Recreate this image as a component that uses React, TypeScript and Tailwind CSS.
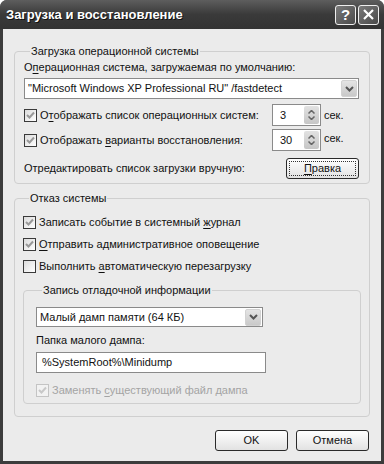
import React from "react";

function U({ children }: { children: React.ReactNode }) {
  return <span className="underline underline-offset-[1.5px]">{children}</span>;
}

function Check({ checked = true, disabled = false }: { checked?: boolean; disabled?: boolean }) {
  return (
    <span
      className={`w-[13px] h-[13px] shrink-0 flex items-center justify-center border ${
        disabled ? "border-[#c4c4c4] bg-[#f2f2f2]" : "border-[#3a3a3a] bg-gradient-to-br from-[#dcdcdc] to-white"
      }`}
    >
      {checked && (
        <svg width="9" height="9" viewBox="0 0 9 9">
          <path
            d="M1 4 L3.5 6.5 L8 1.5"
            fill="none"
            stroke={disabled ? "#c8c8c8" : "#999"}
            strokeWidth="2"
          />
        </svg>
      )}
    </span>
  );
}

function Arrow() {
  return (
    <span className="w-[16px] h-[17px] mr-[1px] rounded-[2px] bg-gradient-to-b from-[#e4e4e4] to-[#c9c9c9] border border-[#d2d2d2] flex items-center justify-center">
      <svg width="9" height="6" viewBox="0 0 9 6">
        <path d="M1 1 L4.5 4.5 L8 1" fill="none" stroke="#555" strokeWidth="2" />
      </svg>
    </span>
  );
}

function Spin({ value }: { value: string }) {
  return (
    <div className="w-[49px] h-[22px] border border-[#8a8a8a] bg-white flex items-center pl-[7px] pr-[1px]">
      <span className="flex-1">{value}</span>
      <span className="w-[15px] h-[18px] rounded-[2px] bg-gradient-to-b from-[#e2e2e2] to-[#c6c6c6] flex flex-col items-center justify-center gap-[2px]">
        <svg width="7" height="4" viewBox="0 0 7 4">
          <path d="M0.5 3.5 L3.5 0.5 L6.5 3.5" fill="none" stroke="#666" strokeWidth="1.5" />
        </svg>
        <svg width="7" height="4" viewBox="0 0 7 4">
          <path d="M0.5 0.5 L3.5 3.5 L6.5 0.5" fill="none" stroke="#666" strokeWidth="1.5" />
        </svg>
      </span>
    </div>
  );
}

function Btn({ children, focus = false }: { children: React.ReactNode; focus?: boolean }) {
  return (
    <div className="w-[73px] h-[21px] rounded-[3px] border border-[#2a2a2a] bg-gradient-to-b from-white to-[#e2e2e2] flex items-center justify-center p-[2px]">
      <div
        className={`w-full h-full flex items-center justify-center ${focus ? "border border-dotted border-[#333]" : ""}`}
      >
        {children}
      </div>
    </div>
  );
}

export default function App() {
  return (
    <div
      className="w-[384px] h-[464px] bg-[#3c3c3c] rounded-t-[7px] flex flex-col text-[11px] text-[#111] leading-none"
      style={{ fontFamily: '"Liberation Sans", Arial, sans-serif' }}
    >
      {/* title bar */}
      <div className="h-[29px] shrink-0 rounded-t-[7px] bg-gradient-to-b from-[#5e5e5e] via-[#3a3a3a] to-[#333] flex items-center pl-[6px] pr-[5px]">
        <span className="flex-1 text-white font-bold text-[13px] [text-shadow:1px_1px_0_#111]">
          Загрузка и восстановление
        </span>
        <div className="flex gap-[2px]">
          <span className="w-[21px] h-[20px] rounded-[3px] border border-[#eee] bg-gradient-to-br from-[#7a7a7a] to-[#4a4a4a] text-white font-bold text-[15px] flex items-center justify-center">
            ?
          </span>
          <span className="w-[21px] h-[20px] rounded-[3px] border border-[#eee] bg-gradient-to-br from-[#7a7a7a] to-[#4a4a4a] flex items-center justify-center">
            <svg width="11" height="11" viewBox="0 0 11 11">
              <path d="M1 1 L10 10 M10 1 L1 10" stroke="white" strokeWidth="2.2" />
            </svg>
          </span>
        </div>
      </div>

      {/* client */}
      <div className="flex-1 mx-[3px] mb-[3px] bg-[#ebebeb] flex flex-col pl-[11px] pr-[11px] pt-[17px]">
        <fieldset className="border border-[#cfcfcf] rounded-[4px] px-[9px] pb-[4px]">
          <legend className="px-[1px] ml-[6px] text-[#111]">Загрузка операционной системы</legend>
          <div className="mt-[5px]">
            О<U>п</U>ерационная система, загружаемая по умолчанию:
          </div>
          <div className="mt-[5px] h-[21px] w-[335px] border border-[#8a8a8a] bg-white flex items-center pl-[3px]">
            <span className="flex-1">"Microsoft Windows XP Professional RU" /fastdetect</span>
            <Arrow />
          </div>
          <div className="mt-[5px] flex items-center">
            <Check />
            <span className="ml-[3px] w-[232px]">
              О<U>т</U>ображать список операционных систем:
            </span>
            <Spin value="3" />
            <span className="ml-[3px]">сек.</span>
          </div>
          <div className="mt-[3px] flex items-center">
            <Check />
            <span className="ml-[3px] w-[232px]">
              Отображать <U>в</U>арианты восстановления:
            </span>
            <Spin value="30" />
            <span className="ml-[3px] -mt-[4px]">сек.</span>
          </div>
          <div className="mt-[7px] flex items-center">
            <span className="w-[262px]">Отредактировать список загрузки вручную:</span>
            <Btn focus>
              <U>П</U>равка
            </Btn>
          </div>
        </fieldset>

        <fieldset className="mt-[9px] border border-[#cfcfcf] rounded-[4px] px-[8px] pb-[12px]">
          <legend className="px-[1px] ml-[6px] text-[#111]">Отказ системы</legend>
          <div className="mt-[12px] flex items-center">
            <Check />
            <span className="ml-[3px]">
              Записать событие в системный <U>ж</U>урнал
            </span>
          </div>
          <div className="mt-[9px] flex items-center">
            <Check />
            <span className="ml-[3px]">
              <U>О</U>тправить административное оповещение
            </span>
          </div>
          <div className="mt-[9px] flex items-center">
            <Check checked={false} />
            <span className="ml-[3px]">
              Выполнить <U>а</U>втоматическую перезагрузку
            </span>
          </div>

          <fieldset className="mt-[12px] border border-[#cfcfcf] rounded-[4px] pl-[12px] pr-[10px] pb-[6px]">
            <legend className="px-[1px] ml-[6px] text-[#111]">Запись отладочной информации</legend>
            <div className="mt-[11px] h-[20px] w-[227px] border border-[#8a8a8a] bg-white flex items-center pl-[3px]">
              <span className="flex-1">Малый дамп памяти (64 КБ)</span>
              <Arrow />
            </div>
            <div className="mt-[8px]">Папка малого дампа:</div>
            <div className="mt-[6px] h-[21px] w-[230px] border border-[#8a8a8a] bg-white flex items-center pl-[5px]">
              %SystemRoot%\Minidump
            </div>
            <div className="mt-[11px] flex items-center text-[#a4a4a4]">
              <Check disabled />
              <span className="ml-[3px]">
                Заменять <U>с</U>уществующий файл дампа
              </span>
            </div>
          </fieldset>
        </fieldset>

        <div className="mt-[13px] flex justify-end gap-[8px] pr-[1px]">
          <Btn>OK</Btn>
          <Btn>Отмена</Btn>
        </div>
      </div>
    </div>
  );
}
